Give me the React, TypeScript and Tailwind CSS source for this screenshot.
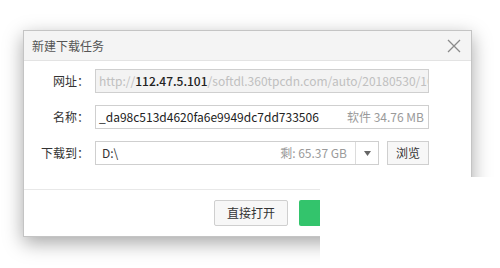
import React from "react";

const font = { fontFamily: '"Noto Sans CJK SC", "Noto Sans", sans-serif' };

export default function App() {
  return (
    <div className="relative w-[500px] h-[268px] overflow-hidden bg-white pt-[30px] pl-[23px]" style={font}>
      <div className="w-[449px] h-[207px] border border-[#c4c4c4] bg-white shadow-[0_6px_18px_rgba(0,0,0,0.35)] flex flex-col">
        <div className="h-[30px] shrink-0 bg-[#f4f4f4] border-b border-[#e3e3e3] flex items-center justify-between pl-[8px] pr-[10px]">
          <span className="text-[12px] text-[#555] leading-none">新建下载任务</span>
          <svg width="14" height="14" viewBox="0 0 14 14" className="mt-[1px]">
            <path d="M1 1 L13 13 M13 1 L1 13" stroke="#8a8a8a" strokeWidth="1.3" fill="none" />
          </svg>
        </div>
        <div className="flex flex-col gap-[12px] pt-[8px] h-[129px] border-b border-[#e8e8e8]">
          <div className="flex items-center">
            <div className="w-[65px] text-right text-[12px] text-[#333]">网址：</div>
            <div className="ml-[6px] w-[334px] h-[24px] border border-[#cfcfcf] bg-[#f3f3f3] flex items-center pl-[3px] overflow-hidden whitespace-nowrap text-[12px]">
              <span className="text-[#c0c0c0]">http://</span>
              <span className="text-[#222] font-medium">112.47.5.101</span>
              <span className="text-[#c0c0c0]">/softdl.360tpcdn.com/auto/20180530/1C</span>
            </div>
          </div>
          <div className="flex items-center">
            <div className="w-[65px] text-right text-[12px] text-[#333]">名称：</div>
            <div className="ml-[6px] w-[334px] h-[24px] border border-[#cfcfcf] bg-white flex items-center justify-between pl-[3px] pr-[4px] overflow-hidden whitespace-nowrap text-[12px]">
              <span className="text-[#222]">_da98c513d4620fa6e9949dc7dd733506</span>
              <span className="text-[#9a9a9a]">软件 34.76 MB</span>
            </div>
          </div>
          <div className="flex items-center">
            <div className="w-[65px] text-right text-[12px] text-[#333]">下载到：</div>
            <div className="ml-[6px] w-[284px] h-[24px] border border-[#cfcfcf] bg-white flex items-center overflow-hidden whitespace-nowrap text-[12px]">
              <span className="flex-1 pl-[6px] text-[#333]">D:\</span>
              <span className="text-[#9a9a9a] pr-[8px]">剩: 65.37 GB</span>
              <div className="w-[23px] h-full border-l border-[#dcdcdc] flex items-center justify-center">
                <svg width="7" height="5" viewBox="0 0 7 5">
                  <path d="M0 0 L7 0 L3.5 5 Z" fill="#666" />
                </svg>
              </div>
            </div>
            <div className="ml-[8px] w-[42px] h-[24px] border border-[#cfcfcf] bg-[#f7f7f7] flex items-center justify-center text-[12px] text-[#333]">
              浏览
            </div>
          </div>
        </div>
        <div className="flex items-center gap-[11px] pl-[190px] pt-[10px]">
          <div className="w-[74px] h-[26px] border border-[#cfcfcf] bg-[#f7f7f7] rounded-[2px] flex items-center justify-center text-[12px] text-[#333]">
            直接打开
          </div>
          <div className="w-[90px] h-[26px] bg-[#33c46c] rounded-[2px] flex items-center justify-center text-[12px] text-white">
            立即下载
          </div>
        </div>
      </div>
      <div className="absolute left-[320px] top-[177px] right-0 bottom-0 bg-white" />
    </div>
  );
}
